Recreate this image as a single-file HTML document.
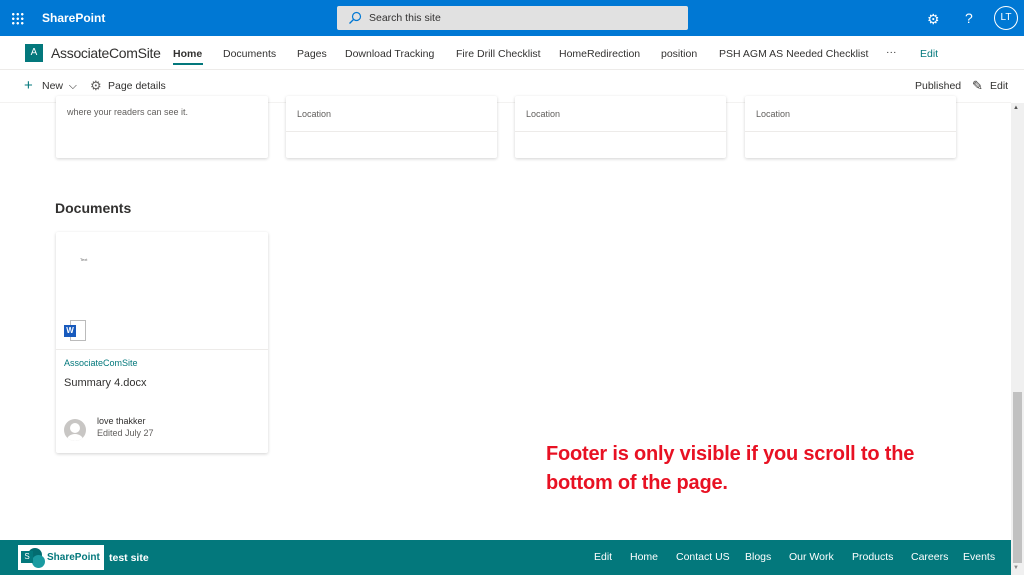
<!DOCTYPE html>
<html><head><meta charset="utf-8"><style>
*{box-sizing:border-box;margin:0;padding:0}
body{width:1024px;height:575px;overflow:hidden;font-family:"Liberation Sans",sans-serif;background:#fff;position:relative;color:#323130}
.abs{position:absolute}
.top{left:0;top:0;width:1024px;height:36px;background:#0078d4;color:#fff}
.nav{font-size:10.5px;color:#323130}
.card{position:absolute;background:#fff;box-shadow:0 1px 3px rgba(0,0,0,.18);border-radius:2px}
.f{font-size:10.5px}
</style></head><body>
<div class="abs top">
  <div class="abs" style="left:11px;top:12px;width:13px;height:13px;background:radial-gradient(circle,#fff 1.1px,transparent 1.4px) 0 0/4.5px 4.5px"></div>
  <div class="abs" style="left:42px;top:11px;font-size:12px;font-weight:bold">SharePoint</div>
  <div class="abs" style="left:337px;top:6px;width:351px;height:24px;background:#e1e1e1;border-radius:2px;color:#323130;font-size:10.5px;padding:6px 0 0 32px">Search this site
    <svg class="abs" style="left:11px;top:5px" width="14" height="14" viewBox="0 0 14 14"><circle cx="8.5" cy="5.5" r="4" fill="none" stroke="#0078d4" stroke-width="1.2"/><path d="M5.5 8.5L1.5 12.5" stroke="#0078d4" stroke-width="1.3"/></svg></div>
  <div class="abs" style="left:927px;top:11px;font-size:14px">⚙</div>
  <div class="abs" style="left:965px;top:10px;font-size:14px">?</div>
  <div class="abs" style="left:994px;top:6px;width:24px;height:24px;border:1.5px solid #fff;border-radius:50%;font-size:10px;text-align:center;line-height:21px">LT</div>
</div>
<div class="abs" style="left:25px;top:44px;width:18px;height:18px;background:#03787c;color:#fff;font-size:10px;text-align:center;line-height:18px">A</div>
<div class="abs" style="left:51px;top:45px;font-size:14px;letter-spacing:-0.3px">AssociateComSite</div>
<div class="abs nav" style="left:173px;top:48px;font-weight:bold">Home</div>
<div class="abs" style="left:173px;top:63px;width:30px;height:2px;background:#03787c"></div>
<div class="abs nav" style="left:223px;top:48px">Documents</div>
<div class="abs nav" style="left:297px;top:48px">Pages</div>
<div class="abs nav" style="left:345px;top:48px">Download Tracking</div>
<div class="abs nav" style="left:456px;top:48px">Fire Drill Checklist</div>
<div class="abs nav" style="left:559px;top:48px">HomeRedirection</div>
<div class="abs nav" style="left:661px;top:48px">position</div>
<div class="abs nav" style="left:719px;top:48px">PSH AGM AS Needed Checklist</div>
<div class="abs nav" style="left:886px;top:46px">···</div>
<div class="abs nav" style="left:920px;top:48px;color:#03787c">Edit</div>
<div class="abs" style="left:0;top:69px;width:1024px;height:1px;background:#edebe9"></div>
<div class="abs nav" style="left:24px;top:77px;font-size:15px;color:#03787c">+</div>
<div class="abs nav" style="left:42px;top:80px">New &nbsp;⌵</div>
<div class="abs nav" style="left:90px;top:78px;font-size:13px;color:#605e5c">⚙</div>
<div class="abs nav" style="left:108px;top:80px">Page details</div>
<div class="abs nav" style="left:915px;top:80px">Published</div>
<div class="abs nav" style="left:972px;top:78px;font-size:13px">✎</div>
<div class="abs nav" style="left:990px;top:80px">Edit</div>
<div class="abs" style="left:0;top:102px;width:1011px;height:1px;background:#f3f2f1"></div>
<div class="card" style="left:56px;top:96px;width:212px;height:62px"><div class="abs" style="left:11px;top:11px;font-size:9px;color:#605e5c">where your readers can see it.</div></div>
<div class="card" style="left:286px;top:96px;width:211px;height:62px"><div class="abs" style="left:11px;top:13px;font-size:9px;color:#605e5c">Location</div><div class="abs" style="left:0;top:35px;width:211px;height:1px;background:#edebe9"></div></div>
<div class="card" style="left:515px;top:96px;width:211px;height:62px"><div class="abs" style="left:11px;top:13px;font-size:9px;color:#605e5c">Location</div><div class="abs" style="left:0;top:35px;width:211px;height:1px;background:#edebe9"></div></div>
<div class="card" style="left:745px;top:96px;width:211px;height:62px"><div class="abs" style="left:11px;top:13px;font-size:9px;color:#605e5c">Location</div><div class="abs" style="left:0;top:35px;width:211px;height:1px;background:#edebe9"></div></div>
<div class="abs" style="left:55px;top:200px;font-size:14px;font-weight:bold">Documents</div>
<div class="card" style="left:56px;top:232px;width:212px;height:221px">
  <div class="abs" style="left:24px;top:25px;font-size:4px;color:#666">Text</div>
  <div class="abs" style="left:14px;top:88px;width:16px;height:21px;background:#fff;border:1px solid #bbb"></div>
  <div class="abs" style="left:8px;top:93px;width:12px;height:12px;background:#185abd;color:#fff;font-size:8px;text-align:center;line-height:12px;font-weight:bold">W</div>
  <div class="abs" style="left:0;top:117px;width:212px;height:1px;background:#edebe9"></div>
  <div class="abs" style="left:8px;top:126px;font-size:9px;color:#03787c">AssociateComSite</div>
  <div class="abs" style="left:8px;top:145px;font-size:11px">Summary 4.docx</div>
  <div class="abs" style="left:8px;top:187px;width:22px;height:22px;border-radius:50%;background:#c8c6c4;overflow:hidden"><div class="abs" style="left:6px;top:4px;width:10px;height:10px;border-radius:50%;background:#fff"></div><div class="abs" style="left:3px;top:15px;width:16px;height:12px;border-radius:50%;background:#fff"></div></div>
  <div class="abs" style="left:41px;top:184px;font-size:9px">love thakker</div>
  <div class="abs" style="left:41px;top:196px;font-size:9px;color:#605e5c">Edited July 27</div>
</div>
<div class="abs" style="left:546px;top:440px;font-size:20px;font-weight:bold;color:#e81123;line-height:29px;letter-spacing:-0.2px">Footer is only visible if you scroll to the<br>bottom of the page.</div>
<div class="abs" style="left:0;top:540px;width:1011px;height:35px;background:#03787c;color:#fff">
  <div class="abs" style="left:18px;top:5px;width:86px;height:25px;background:#fff">
    <div class="abs" style="left:10px;top:3px;width:14px;height:14px;border-radius:50%;background:#036c70"></div>
    <div class="abs" style="left:14px;top:10px;width:13px;height:13px;border-radius:50%;background:#1a9ba1"></div>
    <div class="abs" style="left:3px;top:6px;width:12px;height:12px;background:#03787c;color:#fff;font-size:8px;text-align:center;line-height:12px">S</div>
    <div class="abs" style="left:29px;top:7px;font-size:10px;color:#03787c;font-weight:bold">SharePoint</div>
  </div>
  <div class="abs" style="left:109px;top:12px;font-size:10.5px;font-weight:bold">test site</div>
  <div class="abs f" style="left:594px;top:11px">Edit</div>
  <div class="abs f" style="left:630px;top:11px">Home</div>
  <div class="abs f" style="left:676px;top:11px">Contact US</div>
  <div class="abs f" style="left:745px;top:11px">Blogs</div>
  <div class="abs f" style="left:789px;top:11px">Our Work</div>
  <div class="abs f" style="left:852px;top:11px">Products</div>
  <div class="abs f" style="left:911px;top:11px">Careers</div>
  <div class="abs f" style="left:963px;top:11px">Events</div>
</div>
<div class="abs" style="left:1011px;top:103px;width:13px;height:472px;background:#f0f0f0"></div>
<div class="abs" style="left:1013px;top:392px;width:9px;height:171px;background:#c1c1c1"></div>
<div class="abs" style="left:1013px;top:105px;font-size:6px;color:#555">▲</div>
<div class="abs" style="left:1013px;top:565px;font-size:6px;color:#888">▼</div>
</body></html>
